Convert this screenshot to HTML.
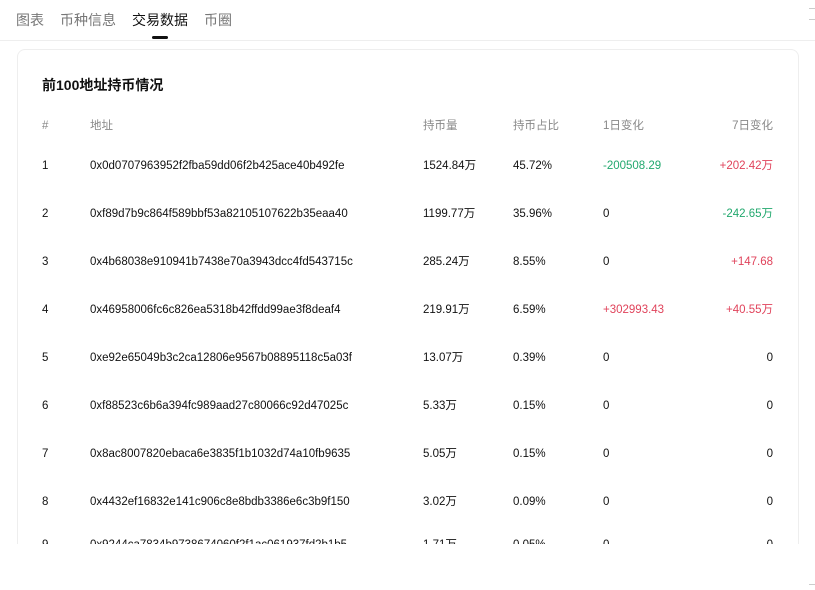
<!DOCTYPE html>
<html><head><meta charset="utf-8"><style>
*{margin:0;padding:0;box-sizing:border-box}
body{width:815px;height:590px;background:#fff;font-family:"Liberation Sans","Noto Sans CJK SC",sans-serif;position:relative;overflow:hidden;color:#111}
.tabs{position:absolute;top:11px;left:16px;font-size:14px;color:#777}
.tabs span{position:absolute;white-space:nowrap;line-height:18px}
.bar{position:absolute;left:152px;top:36px;width:16px;height:3px;background:#111;border-radius:2px}
.hline{position:absolute;left:0;right:0;top:40px;height:1px;background:#eee}
.card{position:absolute;left:17px;top:49px;width:782px;height:495px;border:1px solid #eee;border-bottom:none;border-radius:8px 8px 0 0;overflow:hidden}
.title{position:absolute;left:24px;top:26px;font-size:14px;font-weight:bold;color:#111;line-height:18px}
.row{position:absolute;left:0;width:782px;height:16px;font-size:11.5px;color:#111}
.row span{position:absolute;top:0;white-space:nowrap;line-height:16px;height:16px;display:block}
.hd{color:#888}
.g{color:#22a86e}.r{color:#e0435b}
.menu{position:absolute;right:0;top:8px;width:6px;height:12px;border-top:1px solid #ccc;border-bottom:1px solid #ccc}
.menu2{position:absolute;right:0;top:584px;width:6px;height:1px;background:#ccc}
</style></head><body>
<div class="tabs">
<span style="left:0">图表</span><span style="left:44px">币种信息</span><span style="left:116px;color:#111">交易数据</span><span style="left:188px">币圈</span>
</div>
<div class="bar"></div>
<div class="menu"></div>
<div class="hline"></div>
<div class="card">
<div class="title">前100地址持币情况</div>
<div class="row hd" style="top:68px"><span style="left:24px">#</span><span style="left:72px">地址</span><span style="left:405px">持币量</span><span style="left:495px">持币占比</span><span style="left:585px">1日变化</span><span style="right:27px">7日变化</span></div>
<div class="row" style="top:108px"><span style="left:24px">1</span><span style="left:72px">0x0d0707963952f2fba59dd06f2b425ace40b492fe</span><span style="left:405px">1524.84万</span><span style="left:495px">45.72%</span><span style="left:585px" class="g">-200508.29</span><span style="right:27px" class="r">+202.42万</span></div>
<div class="row" style="top:156px"><span style="left:24px">2</span><span style="left:72px">0xf89d7b9c864f589bbf53a82105107622b35eaa40</span><span style="left:405px">1199.77万</span><span style="left:495px">35.96%</span><span style="left:585px">0</span><span style="right:27px" class="g">-242.65万</span></div>
<div class="row" style="top:204px"><span style="left:24px">3</span><span style="left:72px">0x4b68038e910941b7438e70a3943dcc4fd543715c</span><span style="left:405px">285.24万</span><span style="left:495px">8.55%</span><span style="left:585px">0</span><span style="right:27px" class="r">+147.68</span></div>
<div class="row" style="top:252px"><span style="left:24px">4</span><span style="left:72px">0x46958006fc6c826ea5318b42ffdd99ae3f8deaf4</span><span style="left:405px">219.91万</span><span style="left:495px">6.59%</span><span style="left:585px" class="r">+302993.43</span><span style="right:27px" class="r">+40.55万</span></div>
<div class="row" style="top:300px"><span style="left:24px">5</span><span style="left:72px">0xe92e65049b3c2ca12806e9567b08895118c5a03f</span><span style="left:405px">13.07万</span><span style="left:495px">0.39%</span><span style="left:585px">0</span><span style="right:27px">0</span></div>
<div class="row" style="top:348px"><span style="left:24px">6</span><span style="left:72px">0xf88523c6b6a394fc989aad27c80066c92d47025c</span><span style="left:405px">5.33万</span><span style="left:495px">0.15%</span><span style="left:585px">0</span><span style="right:27px">0</span></div>
<div class="row" style="top:396px"><span style="left:24px">7</span><span style="left:72px">0x8ac8007820ebaca6e3835f1b1032d74a10fb9635</span><span style="left:405px">5.05万</span><span style="left:495px">0.15%</span><span style="left:585px">0</span><span style="right:27px">0</span></div>
<div class="row" style="top:444px"><span style="left:24px">8</span><span style="left:72px">0x4432ef16832e141c906c8e8bdb3386e6c3b9f150</span><span style="left:405px">3.02万</span><span style="left:495px">0.09%</span><span style="left:585px">0</span><span style="right:27px">0</span></div>
<div class="row" style="top:487px"><span style="left:24px">9</span><span style="left:72px">0x9244ca7834b9738674060f2f1ac061937fd2b1b5</span><span style="left:405px">1.71万</span><span style="left:495px">0.05%</span><span style="left:585px">0</span><span style="right:27px">0</span></div>
</div>
<div class="menu2"></div>
</body></html>
